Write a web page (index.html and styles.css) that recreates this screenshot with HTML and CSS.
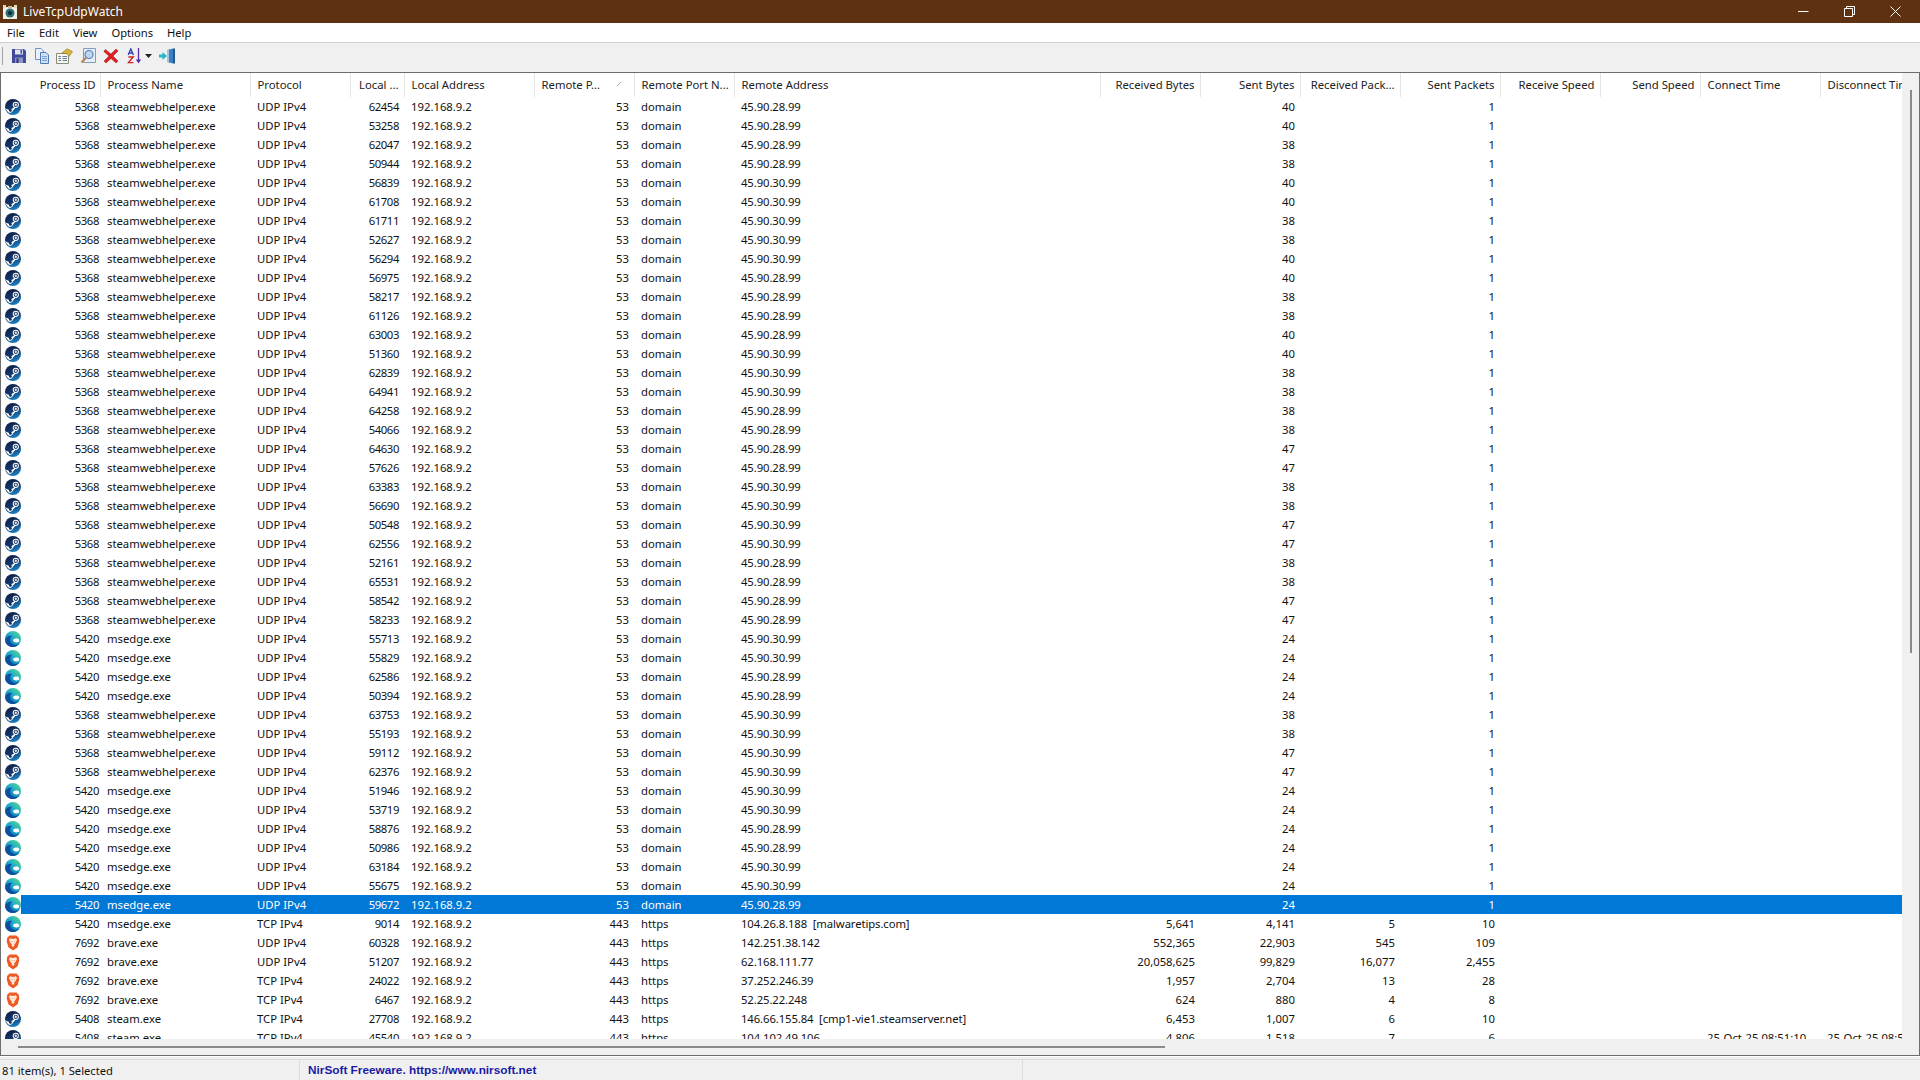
FILE: index.html
```html
<!DOCTYPE html>
<html lang="en">
<head>
  <meta charset="UTF-8" />
  <title>LiveTcpUdpWatch</title>
  <link rel="stylesheet" href="styles.css">
</head>
<body>

  <svg class="defs" width="0" height="0">
    <defs>
      <linearGradient id="steam-bg" x1="0" y1="0" x2="0.4" y2="1">
        <stop offset="0" stop-color="#101a3a"/>
        <stop offset="0.55" stop-color="#12356a"/>
        <stop offset="1" stop-color="#1a7ab8"/>
      </linearGradient>
      <linearGradient id="edge-bg" x1="0.9" y1="0.1" x2="0.2" y2="0.9">
        <stop offset="0" stop-color="#55d68c"/>
        <stop offset="0.45" stop-color="#22aecb"/>
        <stop offset="1" stop-color="#0f6cb8"/>
      </linearGradient>
      <symbol id="steam" viewBox="0 0 16 16">
        <circle cx="8" cy="8" r="8" fill="url(#steam-bg)"/>
        <path d="M0 9.2L4.6 11.2L9 8.6L9 6L11 4L13 6L11 8.2L8 11.6A3 3 0 0 1 2.5 12.4Z" fill="#fff"/>
        <circle cx="10.8" cy="5.8" r="3.1" fill="#fff"/>
        <circle cx="10.8" cy="5.8" r="2.1" fill="#14284f"/>
        <circle cx="10.8" cy="5.8" r="1.2" fill="#dfe6f0"/>
        <circle cx="5.4" cy="11.4" r="1.4" fill="#14284f"/>
      </symbol>
      <symbol id="edge" viewBox="0 0 16 16">
        <circle cx="8" cy="8" r="8" fill="url(#edge-bg)"/>
        <path d="M.2 9.5C.6 5.5 4.5 4 7.2 5C5.2 6 4.6 9 5.6 11C7 13.8 11 15 14.2 12.6C12.8 14.8 10.4 16 8 16C4 16 .2 13.5 .2 9.5Z" fill="#0b4f9e"/>
        <path d="M8 9.6C8 7.6 10.5 7 12.6 7.6C13.8 8 14.4 9 14.2 10.6C12 12.2 8.4 11.6 8 9.6Z" fill="#fff"/>
      </symbol>
      <symbol id="brave" viewBox="0 0 16 16">
        <path d="M4.5 .5L11.5 .5L14.2 3.2L13.8 4.6L14.4 6L12.6 12.2L8 15.5L3.4 12.2L1.6 6L2.2 4.6L1.8 3.2Z" fill="#ee5a24"/>
        <path d="M5 3.2L8 4L11 3.2L12 5L10.4 8.2L9 9.4L9.6 10.4L8 12L6.4 10.4L7 9.4L5.6 8.2L4 5Z" fill="#ffe9dc"/>
        <path d="M6.4 6L7.4 6.6L6.8 7.2ZM9.6 6L8.6 6.6L9.2 7.2Z" fill="#e2622a"/>
      </symbol>
    </defs>
  </svg>

  <header class="titlebar">
    <svg class="app-icon" width="16" height="16" viewBox="0 0 16 16">
      <rect x="1" y="3" width="14" height="12" fill="#f4f0e6"/>
      <rect x="1" y="1" width="3" height="3" fill="#e8dcc0"/>
      <rect x="12" y="1" width="3" height="3" fill="#e8dcc0"/>
      <rect x="6" y="2" width="4" height="2" fill="#c9b98f"/>
      <circle cx="8" cy="9" r="4.5" fill="#2f6f78"/>
      <circle cx="8" cy="9" r="2" fill="#0e2a33"/>
    </svg>
    <span class="title">LiveTcpUdpWatch</span>
    <div class="caption">
      <button class="caption-btn">
        <svg width="11" height="11" viewBox="0 0 11 11"><path d="M0 5.5H10.5" stroke="#fff" fill="none"/></svg>
      </button>
      <button class="caption-btn">
        <svg width="11" height="11" viewBox="0 0 11 11"><path d="M.5 2.5H8.5V10.5H.5ZM2.5 2.5V.5H10.5V8.5H8.5" stroke="#fff" fill="none"/></svg>
      </button>
      <button class="caption-btn">
        <svg width="11" height="11" viewBox="0 0 11 11"><path d="M.5 .5L10.5 10.5M10.5 .5L.5 10.5" stroke="#fff" fill="none"/></svg>
      </button>
    </div>
  </header>

  <nav class="menubar">
    <span class="menu-item">File</span>
    <span class="menu-item">Edit</span>
    <span class="menu-item">View</span>
    <span class="menu-item">Options</span>
    <span class="menu-item">Help</span>
  </nav>

  <div class="toolbar">
    <span class="gripper"></span>
    <button class="tool">
      <svg width="16" height="16" viewBox="0 0 16 16">
        <path d="M1 1H13L15 3V15H1Z" fill="#3f4a9c"/>
        <rect x="4" y="1.5" width="8" height="5" fill="#dfe3f2"/>
        <rect x="9.5" y="2" width="1.6" height="3.6" fill="#3f4a9c"/>
        <rect x="4" y="9.5" width="8" height="5.5" fill="#8d92c4"/>
        <rect x="5.5" y="10.5" width="2" height="4.5" fill="#2b3378"/>
      </svg>
    </button>
    <button class="tool">
      <svg width="16" height="16" viewBox="0 0 16 16">
        <path d="M1.5 .5H7L9.5 3V11.5H1.5Z" fill="#eaf1fa" stroke="#6f93c4"/>
        <path d="M6.5 4.5H12L14.5 7V15.5H6.5Z" fill="#cfe0f5" stroke="#4f7cb8"/>
        <path d="M8 8.5H13M8 10.5H13M8 12.5H13" stroke="#7fa3d0"/>
      </svg>
    </button>
    <button class="tool">
      <svg width="17" height="16" viewBox="0 0 17 16">
        <path d="M.5 5.5H12.5V15.5H.5Z" fill="#f6f6f0" stroke="#8a8a7a"/>
        <path d="M2.5 8.5H5M2.5 10.5H5M2.5 12.5H5M6.5 8.5H11M6.5 10.5H11M6.5 12.5H11" stroke="#6b7b94"/>
        <path d="M6 5L11 .8L16.5 3.6L13 8.5L11.5 6Z" fill="#d8b43c" stroke="#8a7320" stroke-width=".6"/>
      </svg>
    </button>
    <button class="tool">
      <svg width="16" height="16" viewBox="0 0 16 16">
        <path d="M3.5 .5H15.5V14.5H3.5Z" fill="#e6eefa" stroke="#7e9cc6"/>
        <circle cx="9" cy="6.5" r="4" fill="#bcd7f2" stroke="#5c83b8" stroke-width="1.2"/>
        <path d="M6 9.8L1.5 14.5" stroke="#b4864a" stroke-width="2.2"/>
      </svg>
    </button>
    <button class="tool">
      <svg width="16" height="16" viewBox="0 0 16 16">
        <path d="M2.4 1.5L8 6L13 1L15 3L10 8L15 13L13 15L8 10.4L3 15L1 13L6 8L.8 3.4Z" fill="#e02020" stroke="#a81414" stroke-width=".5"/>
      </svg>
    </button>
    <button class="tool tool-sort">
      <svg width="16" height="16" viewBox="0 0 16 16">
        <path d="M1.2 7L3.8 .8L6.4 7M2.2 5H5.4" stroke="#2b3fb0" stroke-width="1.3" fill="none"/>
        <path d="M1.4 9H6.2L1.4 14.6H6.4" stroke="#d02020" stroke-width="1.4" fill="none"/>
        <path d="M11.5 0V13" stroke="#5a2ea8" stroke-width="1.3"/>
        <path d="M8.8 11.5H14.2L11.5 15.5Z" fill="#5a2ea8"/>
      </svg>
      <svg class="caret" width="7" height="4" viewBox="0 0 7 4"><path d="M0 0H7L3.5 4Z" fill="#222"/></svg>
    </button>
    <button class="tool">
      <svg width="16" height="16" viewBox="0 0 16 16">
        <path d="M8 2L14 .5V15.5L8 14Z" fill="#3f7fc0"/>
        <path d="M8 2H10V14H8Z" fill="#9cc4e8"/>
        <path d="M14 .5H16V15.5H14Z" fill="#24568c"/>
        <path d="M0 6.5H3.5V4L8 8L3.5 12V9.5H0Z" fill="#29b6c8"/>
      </svg>
    </button>
  </div>

  <main class="listview">
    <div class="list-top">
      <div class="list-clip">
        <table class="grid">
          <colgroup>
            <col class="c-icon"><col class="c-pid"><col class="c-name"><col class="c-proto">
            <col class="c-lport"><col class="c-laddr"><col class="c-rport"><col class="c-rname">
            <col class="c-raddr"><col class="c-num"><col class="c-num"><col class="c-num">
            <col class="c-num"><col class="c-num"><col class="c-num"><col class="c-ctime"><col class="c-dtime">
          </colgroup>
          <thead>
            <tr>
              <th colspan="2" class="right">Process ID</th>
              <th>Process Name</th>
              <th>Protocol</th>
              <th class="right">Local ...</th>
              <th>Local Address</th>
              <th>Remote P...<svg class="sort-arrow" width="5" height="5" viewBox="0 0 5 5"><path d="M0 5L4 1" stroke="#a8a8a8"/></svg></th>
              <th>Remote Port N...</th>
              <th>Remote Address</th>
              <th class="right">Received Bytes</th>
              <th class="right">Sent Bytes</th>
              <th class="right">Received Pack...</th>
              <th class="right">Sent Packets</th>
              <th class="right">Receive Speed</th>
              <th class="right">Send Speed</th>
              <th>Connect Time</th>
              <th>Disconnect Time</th>
            </tr>
          </thead>
          <tbody>
            <tr><td><svg class="ico"><use href="#steam"/></svg></td><td>5368</td><td>steamwebhelper.exe</td><td>UDP IPv4</td><td>62454</td><td>192.168.9.2</td><td>53</td><td>domain</td><td>45.90.28.99</td><td></td><td>40</td><td></td><td>1</td></tr>
            <tr><td><svg class="ico"><use href="#steam"/></svg></td><td>5368</td><td>steamwebhelper.exe</td><td>UDP IPv4</td><td>53258</td><td>192.168.9.2</td><td>53</td><td>domain</td><td>45.90.28.99</td><td></td><td>40</td><td></td><td>1</td></tr>
            <tr><td><svg class="ico"><use href="#steam"/></svg></td><td>5368</td><td>steamwebhelper.exe</td><td>UDP IPv4</td><td>62047</td><td>192.168.9.2</td><td>53</td><td>domain</td><td>45.90.28.99</td><td></td><td>38</td><td></td><td>1</td></tr>
            <tr><td><svg class="ico"><use href="#steam"/></svg></td><td>5368</td><td>steamwebhelper.exe</td><td>UDP IPv4</td><td>50944</td><td>192.168.9.2</td><td>53</td><td>domain</td><td>45.90.28.99</td><td></td><td>38</td><td></td><td>1</td></tr>
            <tr><td><svg class="ico"><use href="#steam"/></svg></td><td>5368</td><td>steamwebhelper.exe</td><td>UDP IPv4</td><td>56839</td><td>192.168.9.2</td><td>53</td><td>domain</td><td>45.90.30.99</td><td></td><td>40</td><td></td><td>1</td></tr>
            <tr><td><svg class="ico"><use href="#steam"/></svg></td><td>5368</td><td>steamwebhelper.exe</td><td>UDP IPv4</td><td>61708</td><td>192.168.9.2</td><td>53</td><td>domain</td><td>45.90.30.99</td><td></td><td>40</td><td></td><td>1</td></tr>
            <tr><td><svg class="ico"><use href="#steam"/></svg></td><td>5368</td><td>steamwebhelper.exe</td><td>UDP IPv4</td><td>61711</td><td>192.168.9.2</td><td>53</td><td>domain</td><td>45.90.30.99</td><td></td><td>38</td><td></td><td>1</td></tr>
            <tr><td><svg class="ico"><use href="#steam"/></svg></td><td>5368</td><td>steamwebhelper.exe</td><td>UDP IPv4</td><td>52627</td><td>192.168.9.2</td><td>53</td><td>domain</td><td>45.90.30.99</td><td></td><td>38</td><td></td><td>1</td></tr>
            <tr><td><svg class="ico"><use href="#steam"/></svg></td><td>5368</td><td>steamwebhelper.exe</td><td>UDP IPv4</td><td>56294</td><td>192.168.9.2</td><td>53</td><td>domain</td><td>45.90.30.99</td><td></td><td>40</td><td></td><td>1</td></tr>
            <tr><td><svg class="ico"><use href="#steam"/></svg></td><td>5368</td><td>steamwebhelper.exe</td><td>UDP IPv4</td><td>56975</td><td>192.168.9.2</td><td>53</td><td>domain</td><td>45.90.28.99</td><td></td><td>40</td><td></td><td>1</td></tr>
            <tr><td><svg class="ico"><use href="#steam"/></svg></td><td>5368</td><td>steamwebhelper.exe</td><td>UDP IPv4</td><td>58217</td><td>192.168.9.2</td><td>53</td><td>domain</td><td>45.90.28.99</td><td></td><td>38</td><td></td><td>1</td></tr>
            <tr><td><svg class="ico"><use href="#steam"/></svg></td><td>5368</td><td>steamwebhelper.exe</td><td>UDP IPv4</td><td>61126</td><td>192.168.9.2</td><td>53</td><td>domain</td><td>45.90.28.99</td><td></td><td>38</td><td></td><td>1</td></tr>
            <tr><td><svg class="ico"><use href="#steam"/></svg></td><td>5368</td><td>steamwebhelper.exe</td><td>UDP IPv4</td><td>63003</td><td>192.168.9.2</td><td>53</td><td>domain</td><td>45.90.28.99</td><td></td><td>40</td><td></td><td>1</td></tr>
            <tr><td><svg class="ico"><use href="#steam"/></svg></td><td>5368</td><td>steamwebhelper.exe</td><td>UDP IPv4</td><td>51360</td><td>192.168.9.2</td><td>53</td><td>domain</td><td>45.90.30.99</td><td></td><td>40</td><td></td><td>1</td></tr>
            <tr><td><svg class="ico"><use href="#steam"/></svg></td><td>5368</td><td>steamwebhelper.exe</td><td>UDP IPv4</td><td>62839</td><td>192.168.9.2</td><td>53</td><td>domain</td><td>45.90.30.99</td><td></td><td>38</td><td></td><td>1</td></tr>
            <tr><td><svg class="ico"><use href="#steam"/></svg></td><td>5368</td><td>steamwebhelper.exe</td><td>UDP IPv4</td><td>64941</td><td>192.168.9.2</td><td>53</td><td>domain</td><td>45.90.30.99</td><td></td><td>38</td><td></td><td>1</td></tr>
            <tr><td><svg class="ico"><use href="#steam"/></svg></td><td>5368</td><td>steamwebhelper.exe</td><td>UDP IPv4</td><td>64258</td><td>192.168.9.2</td><td>53</td><td>domain</td><td>45.90.28.99</td><td></td><td>38</td><td></td><td>1</td></tr>
            <tr><td><svg class="ico"><use href="#steam"/></svg></td><td>5368</td><td>steamwebhelper.exe</td><td>UDP IPv4</td><td>54066</td><td>192.168.9.2</td><td>53</td><td>domain</td><td>45.90.28.99</td><td></td><td>38</td><td></td><td>1</td></tr>
            <tr><td><svg class="ico"><use href="#steam"/></svg></td><td>5368</td><td>steamwebhelper.exe</td><td>UDP IPv4</td><td>64630</td><td>192.168.9.2</td><td>53</td><td>domain</td><td>45.90.28.99</td><td></td><td>47</td><td></td><td>1</td></tr>
            <tr><td><svg class="ico"><use href="#steam"/></svg></td><td>5368</td><td>steamwebhelper.exe</td><td>UDP IPv4</td><td>57626</td><td>192.168.9.2</td><td>53</td><td>domain</td><td>45.90.28.99</td><td></td><td>47</td><td></td><td>1</td></tr>
            <tr><td><svg class="ico"><use href="#steam"/></svg></td><td>5368</td><td>steamwebhelper.exe</td><td>UDP IPv4</td><td>63383</td><td>192.168.9.2</td><td>53</td><td>domain</td><td>45.90.30.99</td><td></td><td>38</td><td></td><td>1</td></tr>
            <tr><td><svg class="ico"><use href="#steam"/></svg></td><td>5368</td><td>steamwebhelper.exe</td><td>UDP IPv4</td><td>56690</td><td>192.168.9.2</td><td>53</td><td>domain</td><td>45.90.30.99</td><td></td><td>38</td><td></td><td>1</td></tr>
            <tr><td><svg class="ico"><use href="#steam"/></svg></td><td>5368</td><td>steamwebhelper.exe</td><td>UDP IPv4</td><td>50548</td><td>192.168.9.2</td><td>53</td><td>domain</td><td>45.90.30.99</td><td></td><td>47</td><td></td><td>1</td></tr>
            <tr><td><svg class="ico"><use href="#steam"/></svg></td><td>5368</td><td>steamwebhelper.exe</td><td>UDP IPv4</td><td>62556</td><td>192.168.9.2</td><td>53</td><td>domain</td><td>45.90.30.99</td><td></td><td>47</td><td></td><td>1</td></tr>
            <tr><td><svg class="ico"><use href="#steam"/></svg></td><td>5368</td><td>steamwebhelper.exe</td><td>UDP IPv4</td><td>52161</td><td>192.168.9.2</td><td>53</td><td>domain</td><td>45.90.28.99</td><td></td><td>38</td><td></td><td>1</td></tr>
            <tr><td><svg class="ico"><use href="#steam"/></svg></td><td>5368</td><td>steamwebhelper.exe</td><td>UDP IPv4</td><td>65531</td><td>192.168.9.2</td><td>53</td><td>domain</td><td>45.90.28.99</td><td></td><td>38</td><td></td><td>1</td></tr>
            <tr><td><svg class="ico"><use href="#steam"/></svg></td><td>5368</td><td>steamwebhelper.exe</td><td>UDP IPv4</td><td>58542</td><td>192.168.9.2</td><td>53</td><td>domain</td><td>45.90.28.99</td><td></td><td>47</td><td></td><td>1</td></tr>
            <tr><td><svg class="ico"><use href="#steam"/></svg></td><td>5368</td><td>steamwebhelper.exe</td><td>UDP IPv4</td><td>58233</td><td>192.168.9.2</td><td>53</td><td>domain</td><td>45.90.28.99</td><td></td><td>47</td><td></td><td>1</td></tr>
            <tr><td><svg class="ico"><use href="#edge"/></svg></td><td>5420</td><td>msedge.exe</td><td>UDP IPv4</td><td>55713</td><td>192.168.9.2</td><td>53</td><td>domain</td><td>45.90.30.99</td><td></td><td>24</td><td></td><td>1</td></tr>
            <tr><td><svg class="ico"><use href="#edge"/></svg></td><td>5420</td><td>msedge.exe</td><td>UDP IPv4</td><td>55829</td><td>192.168.9.2</td><td>53</td><td>domain</td><td>45.90.30.99</td><td></td><td>24</td><td></td><td>1</td></tr>
            <tr><td><svg class="ico"><use href="#edge"/></svg></td><td>5420</td><td>msedge.exe</td><td>UDP IPv4</td><td>62586</td><td>192.168.9.2</td><td>53</td><td>domain</td><td>45.90.28.99</td><td></td><td>24</td><td></td><td>1</td></tr>
            <tr><td><svg class="ico"><use href="#edge"/></svg></td><td>5420</td><td>msedge.exe</td><td>UDP IPv4</td><td>50394</td><td>192.168.9.2</td><td>53</td><td>domain</td><td>45.90.28.99</td><td></td><td>24</td><td></td><td>1</td></tr>
            <tr><td><svg class="ico"><use href="#steam"/></svg></td><td>5368</td><td>steamwebhelper.exe</td><td>UDP IPv4</td><td>63753</td><td>192.168.9.2</td><td>53</td><td>domain</td><td>45.90.30.99</td><td></td><td>38</td><td></td><td>1</td></tr>
            <tr><td><svg class="ico"><use href="#steam"/></svg></td><td>5368</td><td>steamwebhelper.exe</td><td>UDP IPv4</td><td>55193</td><td>192.168.9.2</td><td>53</td><td>domain</td><td>45.90.30.99</td><td></td><td>38</td><td></td><td>1</td></tr>
            <tr><td><svg class="ico"><use href="#steam"/></svg></td><td>5368</td><td>steamwebhelper.exe</td><td>UDP IPv4</td><td>59112</td><td>192.168.9.2</td><td>53</td><td>domain</td><td>45.90.30.99</td><td></td><td>47</td><td></td><td>1</td></tr>
            <tr><td><svg class="ico"><use href="#steam"/></svg></td><td>5368</td><td>steamwebhelper.exe</td><td>UDP IPv4</td><td>62376</td><td>192.168.9.2</td><td>53</td><td>domain</td><td>45.90.30.99</td><td></td><td>47</td><td></td><td>1</td></tr>
            <tr><td><svg class="ico"><use href="#edge"/></svg></td><td>5420</td><td>msedge.exe</td><td>UDP IPv4</td><td>51946</td><td>192.168.9.2</td><td>53</td><td>domain</td><td>45.90.30.99</td><td></td><td>24</td><td></td><td>1</td></tr>
            <tr><td><svg class="ico"><use href="#edge"/></svg></td><td>5420</td><td>msedge.exe</td><td>UDP IPv4</td><td>53719</td><td>192.168.9.2</td><td>53</td><td>domain</td><td>45.90.30.99</td><td></td><td>24</td><td></td><td>1</td></tr>
            <tr><td><svg class="ico"><use href="#edge"/></svg></td><td>5420</td><td>msedge.exe</td><td>UDP IPv4</td><td>58876</td><td>192.168.9.2</td><td>53</td><td>domain</td><td>45.90.28.99</td><td></td><td>24</td><td></td><td>1</td></tr>
            <tr><td><svg class="ico"><use href="#edge"/></svg></td><td>5420</td><td>msedge.exe</td><td>UDP IPv4</td><td>50986</td><td>192.168.9.2</td><td>53</td><td>domain</td><td>45.90.28.99</td><td></td><td>24</td><td></td><td>1</td></tr>
            <tr><td><svg class="ico"><use href="#edge"/></svg></td><td>5420</td><td>msedge.exe</td><td>UDP IPv4</td><td>63184</td><td>192.168.9.2</td><td>53</td><td>domain</td><td>45.90.30.99</td><td></td><td>24</td><td></td><td>1</td></tr>
            <tr><td><svg class="ico"><use href="#edge"/></svg></td><td>5420</td><td>msedge.exe</td><td>UDP IPv4</td><td>55675</td><td>192.168.9.2</td><td>53</td><td>domain</td><td>45.90.30.99</td><td></td><td>24</td><td></td><td>1</td></tr>
            <tr class="selected"><td><svg class="ico"><use href="#edge"/></svg></td><td>5420</td><td>msedge.exe</td><td>UDP IPv4</td><td>59672</td><td>192.168.9.2</td><td>53</td><td>domain</td><td>45.90.28.99</td><td></td><td>24</td><td></td><td>1</td><td></td><td></td><td></td><td></td></tr>
            <tr><td><svg class="ico"><use href="#edge"/></svg></td><td>5420</td><td>msedge.exe</td><td>TCP IPv4</td><td>9014</td><td>192.168.9.2</td><td>443</td><td>https</td><td>104.26.8.188&nbsp; [malwaretips.com]</td><td>5,641</td><td>4,141</td><td>5</td><td>10</td></tr>
            <tr><td><svg class="ico"><use href="#brave"/></svg></td><td>7692</td><td>brave.exe</td><td>UDP IPv4</td><td>60328</td><td>192.168.9.2</td><td>443</td><td>https</td><td>142.251.38.142</td><td>552,365</td><td>22,903</td><td>545</td><td>109</td></tr>
            <tr><td><svg class="ico"><use href="#brave"/></svg></td><td>7692</td><td>brave.exe</td><td>UDP IPv4</td><td>51207</td><td>192.168.9.2</td><td>443</td><td>https</td><td>62.168.111.77</td><td>20,058,625</td><td>99,829</td><td>16,077</td><td>2,455</td></tr>
            <tr><td><svg class="ico"><use href="#brave"/></svg></td><td>7692</td><td>brave.exe</td><td>TCP IPv4</td><td>24022</td><td>192.168.9.2</td><td>443</td><td>https</td><td>37.252.246.39</td><td>1,957</td><td>2,704</td><td>13</td><td>28</td></tr>
            <tr><td><svg class="ico"><use href="#brave"/></svg></td><td>7692</td><td>brave.exe</td><td>TCP IPv4</td><td>6467</td><td>192.168.9.2</td><td>443</td><td>https</td><td>52.25.22.248</td><td>624</td><td>880</td><td>4</td><td>8</td></tr>
            <tr><td><svg class="ico"><use href="#steam"/></svg></td><td>5408</td><td>steam.exe</td><td>TCP IPv4</td><td>27708</td><td>192.168.9.2</td><td>443</td><td>https</td><td>146.66.155.84&nbsp; [cmp1-vie1.steamserver.net]</td><td>6,453</td><td>1,007</td><td>6</td><td>10</td></tr>
            <tr><td><svg class="ico"><use href="#steam"/></svg></td><td>5408</td><td>steam.exe</td><td>TCP IPv4</td><td>45540</td><td>192.168.9.2</td><td>443</td><td>https</td><td>104.102.49.106</td><td>4,806</td><td>1,518</td><td>7</td><td>6</td><td></td><td></td><td>25-Oct-25 08:51:10</td><td>25-Oct-25 08:51:10</td></tr>
          </tbody>
        </table>
      </div>
      <div class="vbar"><div class="vthumb"></div></div>
    </div>
    <div class="hbar"><div class="hthumb"></div></div>
  </main>

  <footer class="statusbar">
    <div class="panel panel-count">81 item(s), 1 Selected</div>
    <div class="panel panel-link">NirSoft Freeware. https://www.nirsoft.net</div>
    <div class="panel"></div>
  </footer>

</body>
</html>
```

FILE: styles.css
```css
* {
  box-sizing: border-box;
}

html, body {
  height: 100%;
}

body {
  margin: 0;
  display: flex;
  flex-direction: column;
  overflow: hidden;
  background-color: #f0f0f0;
  color: #111;
  font-family: "Noto Sans", "Open Sans", sans-serif;
  font-size: 11.5px;
}

.defs {
  position: absolute;
}

.titlebar {
  display: flex;
  align-items: center;
  flex: 0 0 23px;
  padding: 0 2px;
  background-color: #5e3111;
  color: #fff;
}

.app-icon {
  margin-right: 5px;
}

.title {
  font-size: 12px;
}

.caption {
  display: flex;
  margin-left: auto;
}

.caption-btn {
  display: flex;
  align-items: center;
  justify-content: center;
  width: 46px;
  height: 23px;
  padding: 0;
  border: none;
  background: none;
}

.menubar {
  display: flex;
  align-items: center;
  flex: 0 0 20px;
  padding-left: 7px;
  gap: 14px;
  background-color: #fff;
  border-bottom: 1px solid #d0d0d0;
  font-size: 11.2px;
}

.toolbar {
  display: flex;
  align-items: center;
  flex: 0 0 29px;
  padding: 0 0 3px 2px;
}

.gripper {
  width: 1px;
  height: 18px;
  margin-right: 4px;
  background-color: #a0a0a0;
}

.tool {
  display: flex;
  align-items: center;
  justify-content: center;
  width: 23px;
  height: 22px;
  padding: 0;
  border: none;
  background: none;
}

.tool-sort {
  justify-content: flex-start;
  width: 33px;
  padding-left: 5px;
  gap: 2px;
}

.listview {
  display: flex;
  flex-direction: column;
  flex: 1;
  min-height: 0;
  border: 1px solid #6e6e6e;
  background-color: #fff;
}

.list-top {
  display: flex;
  flex: 1;
  min-height: 0;
}

.list-clip {
  width: 1901px;
  overflow: hidden;
}

.grid {
  width: 1901px;
  table-layout: fixed;
  border-collapse: collapse;
}

.c-icon { width: 20px; }
.c-pid { width: 79px; }
.c-name { width: 150px; }
.c-proto { width: 100px; }
.c-lport { width: 54px; }
.c-laddr { width: 130px; }
.c-rport { width: 100px; }
.c-rname { width: 100px; }
.c-raddr { width: 366px; }
.c-num { width: 100px; }
.c-ctime { width: 120px; }
.c-dtime { width: 82px; }

.grid th {
  height: 24px;
  padding: 0 5px 2px 7px;
  overflow: hidden;
  border-right: 1px solid #e5e5e5;
  color: #222;
  font-size: 11.3px;
  font-weight: normal;
  text-align: left;
  white-space: nowrap;
}

.grid th.right {
  text-align: right;
}

.grid th:first-child {
  padding-right: 4px;
}

.grid th:last-child {
  border-right: none;
}

.sort-arrow {
  float: right;
  margin: 4px 7px 0 0;
}

.grid td {
  height: 19px;
  padding: 0 5px 0 7px;
  overflow: hidden;
  white-space: nowrap;
  font-size: 11.3px;
  line-height: 19px;
}

.grid td:nth-child(1) {
  padding: 0 0 0 4px;
}

.ico {
  display: block;
  width: 16px;
  height: 16px;
}

/* numeric columns */
.grid td:nth-child(2),
.grid td:nth-child(5),
.grid td:nth-child(7),
.grid td:nth-child(10),
.grid td:nth-child(11),
.grid td:nth-child(12),
.grid td:nth-child(13) {
  text-align: right;
}

.grid td:nth-child(2) {
  padding-right: 1px;
  letter-spacing: -.4px;
}

.grid td:nth-child(5) {
  letter-spacing: -.4px;
}

.grid td:nth-child(9) {
  letter-spacing: -.1px;
}

.selected td {
  background-color: #0078d7;
  color: #fff;
}

.selected td:nth-child(1) {
  background-color: #fff;
}

.vbar {
  flex: 0 0 17px;
  padding: 17px 7px 0 8px;
  background-color: #f0f0f0;
}

.vthumb {
  width: 2px;
  height: 563px;
  background-color: #8a8a8a;
}

.hbar {
  flex: 0 0 16px;
  padding: 7px 0 0 17px;
  background-color: #f0f0f0;
}

.hthumb {
  width: 1147px;
  height: 2px;
  background-color: #8a8a8a;
}

.statusbar {
  display: flex;
  flex: 0 0 24px;
  padding-top: 2px;
  border-top: 1px solid #fff;
}

.panel {
  display: flex;
  align-items: center;
  flex: 1;
  padding-left: 2px;
  border-top: 1px solid #dcdcdc;
}

.panel-count {
  flex: 0 0 300px;
  border-right: 1px solid #dcdcdc;
  font-size: 11.2px;
}

.panel-link {
  flex: 0 0 723px;
  padding-left: 8px;
  border-right: 1px solid #dcdcdc;
  color: #1a1aa6;
  font-family: "Liberation Sans", Arial, sans-serif;
  font-size: 11.8px;
  font-weight: bold;
}
```
